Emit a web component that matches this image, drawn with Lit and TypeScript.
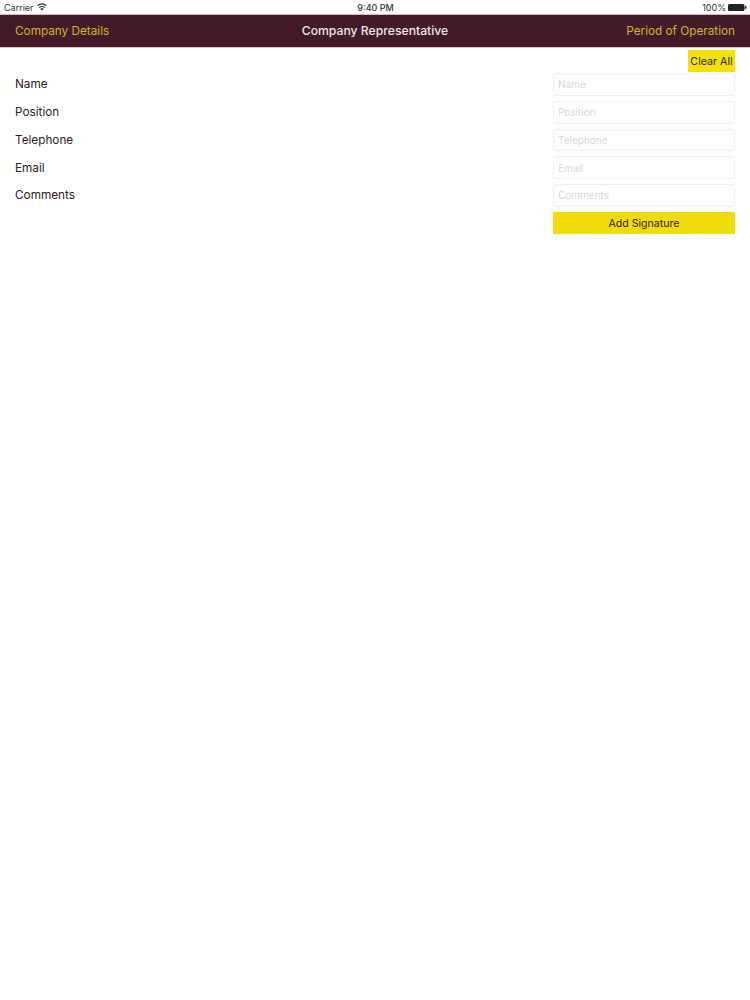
import { LitElement, html, css } from "lit";
import { customElement } from "lit/decorators.js";

const FIELDS = ["Name", "Position", "Telephone", "Email", "Comments"];

@customElement("app-root")
export class AppRoot extends LitElement {
  static styles = css`
    :host {
      display: block;
      width: 750px;
      height: 1000px;
      background: #fff;
      font-family: Inter, "Liberation Sans", sans-serif;
      color: #2b1a1e;
      overflow: hidden;
    }
    .status {
      height: 14px;
      display: grid;
      grid-template-columns: 1fr auto 1fr;
      align-items: center;
      padding: 0 3px 0 4px;
      font-size: 9px;
      color: #333;
    }
    .status-left { display: flex; align-items: center; gap: 3px; }
    .status-right { display: flex; align-items: center; justify-content: flex-end; gap: 2px; }
    .time { font-size: 9px; font-weight: 500; }
    .nav {
      height: 31px;
      background: #431a28;
      border-top: 1px solid #d9b6bd;
      border-bottom: 1px solid #e4bcc2;
      display: grid;
      grid-template-columns: 1fr auto 1fr;
      align-items: center;
      padding: 0 15px 1px;
      font-size: 11.75px;
    }
    .nav .link { color: #d3b22c; }
    .nav .right { text-align: right; }
    .nav .title { color: #f1e6e6; font-weight: 500; font-size: 12.2px; }
    .body { padding: 2px 15px 0; display: flex; flex-direction: column; align-items: stretch; }
    .clear-row { display: flex; justify-content: flex-end; }
    .clear {
      width: 47px;
      height: 22px;
      background: #f3e00d;
      color: #3a2412;
      font-size: 10.7px;
      display: flex;
      align-items: center;
      justify-content: center;
    }
    .rows { display: flex; flex-direction: column; gap: 5px; margin-top: 1px; }
    .row {
      display: flex;
      justify-content: space-between;
      align-items: center;
      height: 22.75px;
    }
    .label { font-size: 11.75px; color: #2e2024; }
    .input {
      width: 182px;
      height: 22.75px;
      box-sizing: border-box;
      border: 1px solid #efeef1;
      border-radius: 4px;
      padding: 0 4px;
      font-size: 10px;
      color: #d6d5db;
      display: flex;
      align-items: center;
    }
    .sign-row { display: flex; justify-content: flex-end; margin-top: 5px; }
    .sign {
      width: 182px;
      height: 22px;
      box-sizing: border-box;
      padding-top: 2px;
      background: #f0dc0a;
      color: #33220f;
      font-size: 10.6px;
      display: flex;
      align-items: center;
      justify-content: center;
    }
  `;

  render() {
    return html`
      <div class="status">
        <div class="status-left">
          <span>Carrier</span>
          <svg width="10" height="8" viewBox="0 0 18 14" fill="none" stroke="#333" stroke-width="2.2">
            <path d="M1 5 a11 11 0 0 1 16 0" />
            <path d="M4 8.2 a7 7 0 0 1 10 0" />
            <path d="M9 13.5 L6 10.5 a4 4 0 0 1 6 0 Z" fill="#333" stroke="none" />
          </svg>
        </div>
        <div class="time">9:40 PM</div>
        <div class="status-right">
          <span>100%</span>
          <svg width="19" height="7" viewBox="0 0 19 7">
            <rect x="0" y="0" width="16.5" height="7" rx="1.5" fill="#222" />
            <rect x="17" y="2" width="1.5" height="3" rx="0.7" fill="#222" />
          </svg>
        </div>
      </div>
      <div class="nav">
        <div class="link">Company Details</div>
        <div class="title">Company Representative</div>
        <div class="link right">Period of Operation</div>
      </div>
      <div class="body">
        <div class="clear-row"><div class="clear">Clear All</div></div>
        <div class="rows">
          ${FIELDS.map(
            (f) => html`<div class="row">
              <span class="label">${f}</span>
              <div class="input">${f}</div>
            </div>`
          )}
        </div>
        <div class="sign-row"><div class="sign">Add Signature</div></div>
      </div>
    `;
  }
}
